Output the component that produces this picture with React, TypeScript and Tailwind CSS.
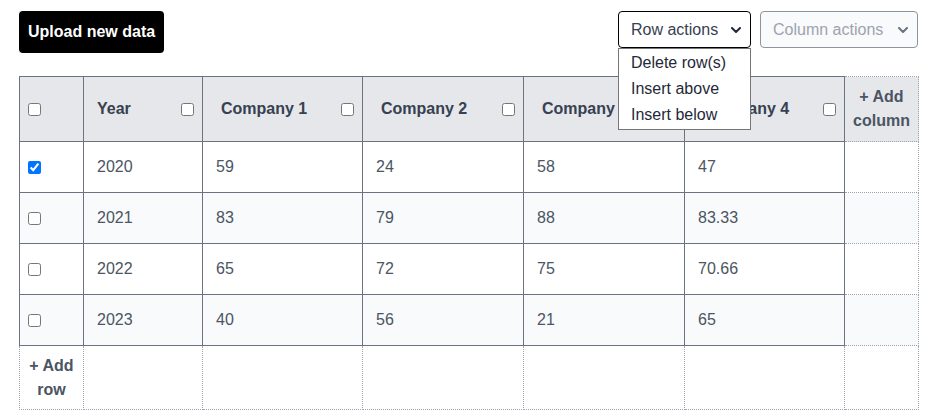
import { useState } from "react";

const companies = ["Company 1", "Company 2", "Company 3", "Company 4"];

const rows = [
  { year: "2020", values: ["59", "24", "58", "47"], checked: true },
  { year: "2021", values: ["83", "79", "88", "83.33"], checked: false },
  { year: "2022", values: ["65", "72", "75", "70.66"], checked: false },
  { year: "2023", values: ["40", "56", "21", "65"], checked: false },
];

function Chevron({ className }: { className?: string }) {
  return (
    <svg width="10" height="6" viewBox="0 0 10 6" className={className} fill="none">
      <path d="M1 1l4 4 4-4" stroke="currentColor" strokeWidth="2" strokeLinecap="round" strokeLinejoin="round" />
    </svg>
  );
}

function Box({ checked = false }: { checked?: boolean }) {
  return <input type="checkbox" defaultChecked={checked} className="m-0 h-[13px] w-[13px] align-middle" />;
}

export default function App() {
  const [open] = useState(true);

  return (
    <div className="min-h-screen bg-white pl-[19px] pt-[11px] font-['Liberation_Sans',Arial,sans-serif] text-[16px]">
      <div className="flex w-[899px] items-start justify-between">
        <button
          type="button"
          className="h-[42px] rounded-[4px] bg-black px-[9px] text-[16px] font-bold text-white"
        >
          Upload new data
        </button>
        <div className="flex gap-[9px]">
          <div className="relative">
            <div className="flex h-[37px] w-[133px] items-center justify-between rounded-[4px] border border-black bg-white pl-[12px] pr-[9px] text-[#374151]">
              <span>Row actions</span>
              <Chevron className="text-[#1f2937]" />
            </div>
            {open && (
              <div className="absolute left-0 top-[37px] z-10 w-[133px] border border-[#767676] bg-white py-px text-[#1f2937]">
                <div className="h-[26px] pl-[12px] leading-[26px]">Delete row(s)</div>
                <div className="h-[26px] pl-[12px] leading-[26px]">Insert above</div>
                <div className="h-[26px] pl-[12px] leading-[26px]">Insert below</div>
              </div>
            )}
          </div>
          <div className="flex h-[37px] w-[158px] items-center justify-between rounded-[4px] border border-[#8f949b] bg-[#f9fafb] pl-[12px] pr-[9px] text-[#9ca3af]">
            <span>Column actions</span>
            <Chevron className="text-[#6b7280]" />
          </div>
        </div>
      </div>

      <table className="mt-[23px] w-[899px] table-fixed border-collapse">
        <colgroup>
          <col className="w-[64px]" />
          <col className="w-[119px]" />
          <col className="w-[160px]" />
          <col className="w-[161px]" />
          <col className="w-[161px]" />
          <col className="w-[160px]" />
          <col className="w-[74px]" />
        </colgroup>
        <thead>
          <tr className="h-[65px] bg-[#e5e7eb] text-[#374151]">
            <th className="border border-solid border-[#6b7280] pl-[8px] text-left font-normal">
              <Box />
            </th>
            <th className="border border-solid border-[#6b7280] pl-[13px] pr-[8px] text-left">
              <div className="flex items-center justify-between">
                <span>Year</span>
                <Box />
              </div>
            </th>
            {companies.map((c) => (
              <th key={c} className="border border-solid border-[#6b7280] pl-[18px] pr-[8px] text-left">
                <div className="flex items-center justify-between">
                  <span>{c}</span>
                  <Box />
                </div>
              </th>
            ))}
            <th className="border border-dotted border-[#9ca3af] py-2 text-center leading-[24px] text-[#4b5563]">
              + Add
              <br />
              column
            </th>
          </tr>
        </thead>
        <tbody className="text-[#4b5563]">
          {rows.map((r, i) => (
            <tr key={r.year} className={i % 2 === 1 ? "h-[51px] bg-[#f9fafb]" : "h-[51px] bg-white"}>
              <td className="border border-solid border-[#6b7280] pl-[8px]">
                <Box checked={r.checked} />
              </td>
              <td className="border border-solid border-[#6b7280] pl-[13px]">{r.year}</td>
              {r.values.map((v, j) => (
                <td key={j} className="border border-solid border-[#6b7280] pl-[13px]">
                  {v}
                </td>
              ))}
              <td className="border border-dotted border-[#9ca3af]" />
            </tr>
          ))}
          <tr className="h-[64px]">
            <td className="border border-dotted border-[#9ca3af] text-center font-bold leading-[24px]">
              + Add
              <br />
              row
            </td>
            <td className="border border-dotted border-[#9ca3af]" />
            <td className="border border-dotted border-[#9ca3af]" />
            <td className="border border-dotted border-[#9ca3af]" />
            <td className="border border-dotted border-[#9ca3af]" />
            <td className="border border-dotted border-[#9ca3af]" />
            <td className="border border-dotted border-[#9ca3af]" />
          </tr>
        </tbody>
      </table>
    </div>
  );
}
